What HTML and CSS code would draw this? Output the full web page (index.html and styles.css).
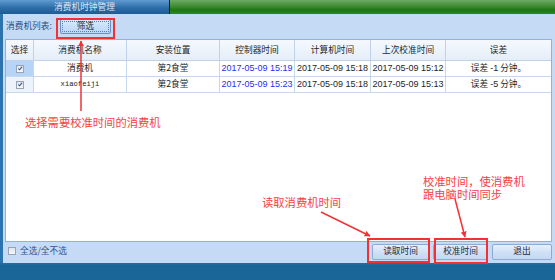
FILE: index.html
```html
<!DOCTYPE html>
<html lang="zh">
<head>
<meta charset="utf-8">
<title>消费机时钟管理</title>
<link rel="stylesheet" href="styles.css">
</head>
<body>
<div class="window">
  <div class="titlebar">
    <div class="title-tab">消费机时钟管理</div>
    <div class="title-sep"></div>
    <div class="title-rest"></div>
  </div>
  <div class="main">
    <div class="edge"></div>
    <div class="panel">
      <div class="toolbar">
        <span class="label">消费机列表:</span>
        <button class="btn btn-filter"><span class="focus">筛选</span></button>
      </div>
      <div class="grid">
        <div class="row head">
          <div class="cell">选择</div>
          <div class="cell">消费机名称</div>
          <div class="cell">安装位置</div>
          <div class="cell">控制器时间</div>
          <div class="cell">计算机时间</div>
          <div class="cell">上次校准时间</div>
          <div class="cell">误差</div>
        </div>
        <div class="row">
          <div class="cell sel active"><span class="chk on"><svg viewBox="0 0 7 7" width="7" height="7"><polyline points="1.5,3.5 3,5 5.8,1.6" fill="none" stroke="#2d4f8c" stroke-width="1.2"/></svg></span></div>
          <div class="cell">消费机</div>
          <div class="cell">第2食堂</div>
          <div class="cell num blue">2017-05-09 15:19</div>
          <div class="cell num">2017-05-09 15:18</div>
          <div class="cell num">2017-05-09 15:12</div>
          <div class="cell">误差 <span class="lat">-1</span> 分钟。</div>
        </div>
        <div class="row">
          <div class="cell sel"><span class="chk on"><svg viewBox="0 0 7 7" width="7" height="7"><polyline points="1.5,3.5 3,5 5.8,1.6" fill="none" stroke="#2d4f8c" stroke-width="1.2"/></svg></span></div>
          <div class="cell mono">xiaofeiji</div>
          <div class="cell">第2食堂</div>
          <div class="cell num blue">2017-05-09 15:23</div>
          <div class="cell num">2017-05-09 15:18</div>
          <div class="cell num">2017-05-09 15:13</div>
          <div class="cell">误差 <span class="lat">-5</span> 分钟。</div>
        </div>
      </div>
      <div class="footer">
        <label class="all"><span class="chk"></span>全选/全不选</label>
        <div class="actions">
          <button class="btn btn-act">读取时间</button>
          <button class="btn btn-act">校准时间</button>
          <button class="btn btn-act btn-exit">退出</button>
        </div>
      </div>
    </div>
  </div>
  <div class="statusbar"></div>
</div>

<svg class="marks" width="555" height="280" viewBox="0 0 555 280">
  <defs>
    <marker id="ah" viewBox="0 0 10 10" refX="9" refY="5" markerWidth="4" markerHeight="4" orient="auto">
      <path d="M0,0 L10,5 L0,10 z" fill="#f23232"/>
    </marker>
  </defs>
  <g fill="none" stroke="#f23232" stroke-width="2">
    <rect x="57" y="19" width="57" height="19"/>
    <rect x="368" y="239" width="61" height="23"/>
    <rect x="435" y="239" width="52" height="24"/>
  </g>
  <g stroke="#f23232" stroke-width="1.5" marker-end="url(#ah)">
    <line x1="81" y1="111" x2="81" y2="41"/>
    <line x1="321" y1="212" x2="370" y2="236"/>
    <line x1="455" y1="199" x2="465" y2="237"/>
  </g>
</svg>
<div class="note note-1">选择需要校准时间的消费机</div>
<div class="note note-2">读取消费机时间</div>
<div class="note note-3"><span>校准时间，使消费机</span><span>跟电脑时间同步</span></div>
</body>
</html>
```
FILE: styles.css
```css
* { box-sizing: border-box; margin: 0; padding: 0; }
html, body { width: 555px; height: 280px; overflow: hidden; }
body {
  position: relative;
  font-family: "Noto Sans CJK SC", "Noto Sans", sans-serif;
  font-size: 8.7px;
  line-height: 1;
  color: #1e1e1e;
  background: #1a6698;
}
.window { display: flex; flex-direction: column; height: 280px; }

.titlebar { height: 14px; display: flex; }
.title-tab {
  width: 169px;
  background: linear-gradient(#5f9bd1, #2e6ea8 55%, #1d5b94);
  color: #dce8f5;
  display: flex; align-items: center; justify-content: center;
}
.title-sep { width: 1px; background: #0d1b0d; }
.title-rest { flex: 1; background: linear-gradient(#6caa63, #458f39 40%, #1e7611 72%, #2b8a1e); }

.main { flex: 1; display: flex; }
.edge { width: 3px; background: #2b74ae; }
.panel {
  flex: 1;
  background: #c4daf5;
  display: flex; flex-direction: column;
  padding: 0 3px 0 2px;
}

.toolbar { height: 25px; display: flex; align-items: center; gap: 8px; padding-left: 1px; }
.label { color: #2c4b7c; }

.btn {
  font-family: inherit; font-size: 8.7px; line-height: 1;
  color: #1b2a45;
  border: 1px solid #8eaad2;
  border-radius: 2px;
  background: linear-gradient(#e6f0fc, #cfe0f5 55%, #c4d8f2);
  display: flex; align-items: center; justify-content: center;
}
.btn-filter { width: 51px; height: 15px; padding: 1px; background: linear-gradient(#d8e9fd, #b9d6f8); border-color: #6f90c0; }
.btn-filter .focus {
  flex: 1; align-self: stretch;
  border: 1px dotted #5b7fb4;
  display: flex; align-items: center; justify-content: center;
}

.grid {
  flex: 1;
  background: #fff;
  border: 1px solid #91b1da;
}
.row {
  display: grid;
  grid-template-columns: 28px 93px 93px 75px 76px 75px 1fr;
  height: 16px;
}
.row.head { height: 21px; background: linear-gradient(#f5f9fe, #e4edf8); }
.cell {
  border-right: 1px solid #c6d8ef;
  border-bottom: 1px solid #c6d8ef;
  display: flex; align-items: center; justify-content: center;
  white-space: nowrap;
}
.row.head .cell { border-color: #c0d2ea; color: #262626; }
.cell:last-child { border-right: none; }
.cell.sel { background: #edf3fa; }
.cell.sel.active { background: #b6d4f6; }
.num { font-family: "Liberation Sans", sans-serif; font-size: 9px; }
.blue { color: #1f2ff5; }
.mono { font-family: "Liberation Mono", monospace; font-size: 7.2px; }
.lat { font-family: "Liberation Sans", sans-serif; font-size: 9px; margin: 0 2px; }

.chk {
  width: 8px; height: 8px;
  border: 1px solid #97a4b6;
  background: linear-gradient(#dfe3e9, #f7f8fa);
  display: inline-flex; align-items: center; justify-content: center;
}

.footer {
  height: 21px;
  display: flex; align-items: center; justify-content: space-between;
  padding: 0 0 2px 3px;
}
.all { display: flex; align-items: center; gap: 4px; color: #34528e; }
.actions { display: flex; gap: 4px; }
.btn-act { width: 57px; height: 16px; }
.btn-act + .btn-act { width: 55px; }
.btn-exit { width: 60px !important; }

.statusbar { height: 17px; background: linear-gradient(#2270a2, #1a6698 15%); }

.marks { position: absolute; left: 0; top: 0; pointer-events: none; }
.note {
  position: absolute;
  color: #f54141;
  font-size: 11.3px;
  line-height: 13px;
  white-space: nowrap;
}
.note-1 { left: 25px; top: 116px; }
.note-2 { left: 262px; top: 196px; }
.note-3 { left: 423px; top: 175px; display: flex; flex-direction: column; }
.note-3 span { display: block; height: 13px; overflow: visible; }
```
